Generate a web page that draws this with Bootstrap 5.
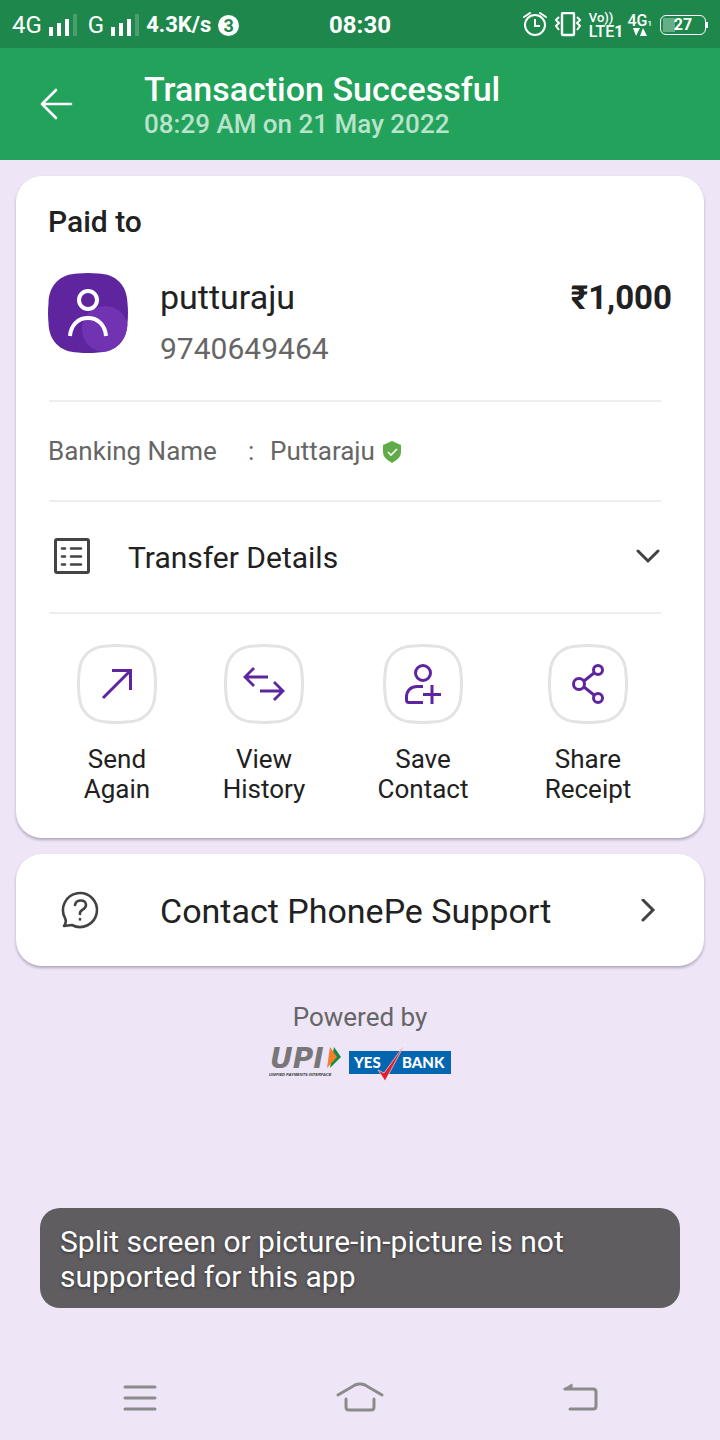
<!DOCTYPE html>
<html lang="en">
<head>
<meta charset="utf-8">
<meta name="viewport" content="width=device-width, initial-scale=1">
<title>Transaction Successful</title>
<link href="https://cdn.jsdelivr.net/npm/bootstrap@5.3.0/dist/css/bootstrap.min.css" rel="stylesheet">
<style>
  body { font-family: Roboto, "Liberation Sans", sans-serif; background: #eee5f6; color: #212121; }
  svg { display: block; flex: none; }
  .medium { font-weight: 500; }
  .statusbar { height: 48px; background: #1e884c; padding: 2px 12px 0; font-size: 24px; line-height: 28px; }
  .statusbar > div { flex: 1 1 0; }
  .status-left { gap: 7px; }
  .strong { font-weight: 700; }
  .speed { font-size: 22px; }
  .volte { font-size: 16px; line-height: 15px; font-weight: 500; }
  .volte .vo { font-size: 13px; line-height: 13px; }
  .data-net { font-size: 16px; line-height: 14px; font-weight: 500; }
  .data-net sub { font-size: 8px; bottom: 0; }
  .count { width: 21px; height: 21px; font-size: 18px; line-height: 21px; color: #1e884c; }
  .battery { width: 46px; height: 20px; border: 1px solid #fff; border-radius: 6px; font-size: 16px; line-height: 18px;
    background: linear-gradient(#67ad86, #67ad86) 2px 2px / 12px 14px no-repeat; }
  .battery-tip { width: 2px; height: 6px; }
  .appbar { height: 112px; background: #23a25c; padding: 0 32px; gap: 64px; }
  .appbar-text { padding-top: 2px; }
  .appbar h1 { font-size: 34px; line-height: 38px; }
  .appbar p { font-size: 26px; line-height: 32px; color: #b9e3cb; }
  .icon-btn { width: 48px; height: 48px; }
  .panel { border: 0; border-radius: 26px; box-shadow: 0 2px 3px rgba(70, 50, 90, .36); }
  .receipt h2 { font-size: 30px; line-height: 36px; padding: 28px 32px 0; }
  .payee { padding: 33px 32px 31px; gap: 32px; }
  .payee-name { font-size: 34px; line-height: 48px; }
  .payee-phone { font-size: 30px; line-height: 40px; margin-top: 8px; }
  .amount { font-size: 33px; line-height: 50px; }
  .dim { color: #666; }
  .rule { height: 2px; margin: 0 43px 0 33px; background: #eee; }
  .banking { height: 98px; padding: 0 32px; font-size: 26px; }
  .banking dt { width: 200px; }
  .banking dd { gap: 7px; }
  .banking .colon { width: 22px; }
  .line-btn { color: #212121; border: 0; background: none; text-align: left; text-decoration: none; }
  .details { height: 110px; padding: 0 44px 0 32px; font-size: 30px; gap: 32px; }
  .actions { display: grid; grid-template-columns: 138fr 156fr 162fr 168fr; padding: 30px 32px 34px; }
  .actions button { color: #212121; border: 0; background: none; font-size: 26px; line-height: 30px; gap: 20px; }
  .support { height: 112px; padding: 2px 44px 0 40px; font-size: 34px; gap: 56px; }
  .powered { font-size: 26px; line-height: 32px; padding-top: 35px; }
  .notice { background: #5f5d60; color: #fff; border-radius: 20px; font-size: 30px; line-height: 35px; padding: 16px 20px 14px; margin: 0 40px 48px; text-shadow: 0 1px 3px rgba(0, 0, 0, .5); }
  .notice p { max-width: 540px; }
  .sysnav { height: 84px; padding: 2px 16% 0; }
</style>
</head>
<body>
<div class="d-flex flex-column min-vh-100">
  <div class="statusbar d-flex align-items-center text-white">
    <div class="status-left d-flex align-items-center">
      <span>4G</span>
      <svg width="28" height="24" viewBox="0 0 28 24" fill="#fff"><path d="M0 14h4v9H0zM8 10h4v13H8zM16 6h4v17h-4z"/><path d="M24 1h4v22h-4z" opacity=".2"/></svg>
      <span class="ms-1">G</span>
      <svg width="28" height="24" viewBox="0 0 28 24" fill="#fff"><path d="M0 14h4v9H0zM8 10h4v13H8zM16 6h4v17h-4z"/><path d="M24 1h4v22h-4z" opacity=".2"/></svg>
      <span class="strong speed">4.3K/s</span>
      <span class="count strong bg-white rounded-circle text-center">3</span>
    </div>
    <time class="strong">08:30</time>
    <div class="d-flex align-items-center justify-content-end">
      <svg width="24" height="26" viewBox="0 0 24 26" fill="none" stroke="#fff" stroke-width="2"><circle cx="12" cy="13" r="10"/><path d="M12 7v7h5"/><path d="M1 5l6-4M23 5l-6-4" stroke-linecap="round"/></svg>
      <svg class="ms-2" width="26" height="26" viewBox="0 0 26 26" fill="none" stroke="#fff" stroke-width="2"><rect x="7" y="1" width="12" height="22" rx="1" stroke-width="2.400"/><path d="M4 5l-3 3 3 3-3 3 3 4M22 5l3 3-3 3 3 3-3 4"/></svg>
      <div class="volte ms-2"><div class="vo">Vo))</div><div>LTE<span class="strong">1</span></div></div>
      <div class="data-net ms-1 text-center"><div>4G<sub>1</sub></div>
        <svg class="mx-auto" width="14" height="8" viewBox="0 0 14 8" fill="#fff"><path d="M0 0h7L3 8zM7 8h7L10 0z"/></svg></div>
      <div class="battery ms-2 strong text-center">27</div><div class="battery-tip bg-white"></div>
    </div>
  </div>

  <header class="appbar d-flex align-items-center text-white">
    <button type="button" class="icon-btn btn p-0 border-0" aria-label="Back">
      <svg width="48" height="48" viewBox="0 0 48 48" fill="none" stroke="#fff" stroke-width="2.600" stroke-linecap="round" stroke-linejoin="round"><path d="M39 24H10M24 10L10 24l14 14"/></svg>
    </button>
    <div class="appbar-text">
      <h1 class="medium mb-0">Transaction Successful</h1>
      <p class="medium mb-0">08:29 AM on 21 May 2022</p>
    </div>
  </header>

  <main class="d-flex flex-column gap-3 p-3 pb-0">
    <section class="panel card receipt">
      <h2 class="medium mb-0">Paid to</h2>
      <div class="payee d-flex align-items-start">
        <svg width="80" height="80" viewBox="0 0 80 80"><defs><clipPath id="tile"><path d="M30 .5Q40-.5 50 .5C68 1 79 12 79.500 30Q80.500 40 79.500 50C79 68 68 79 50 79.500Q40 80.500 30 79.500C12 79 1 68 .5 50Q-.5 40 .5 30C1 12 12 1 30 .5z"/></clipPath></defs>
          <g clip-path="url(#tile)"><path fill="#5f259f" d="M0 0h80v80H0z"/><circle cx="57" cy="56" r="23" fill="#7233b3"/></g>
          <g fill="none" stroke="#fff" stroke-width="4"><circle cx="40" cy="27" r="9"/><path d="M22 63c1-11 8-18 18-18s17 7 18 18"/></g></svg>
        <div class="flex-grow-1">
          <div class="payee-name">putturaju</div>
          <div class="payee-phone dim">9740649464</div>
        </div>
        <div class="amount strong">₹1,000</div>
      </div>
      <div class="rule"></div>
      <dl class="banking dim d-flex align-items-center mb-0">
        <dt class="fw-normal">Banking Name</dt>
        <dd class="d-flex align-items-center mb-0"><span class="d-flex align-items-center"><span class="colon">:</span>Puttaraju</span>
          <svg width="20" height="26" viewBox="0 0 20 26"><path d="M10 3l9 4v7c0 5-4 8-9 11-5-3-9-6-9-11V7z" fill="#5fab46"/><path d="M6 14l3 3 6-6" fill="none" stroke="#fff" stroke-width="1.600"/></svg></dd>
      </dl>
      <div class="rule"></div>
      <button type="button" class="line-btn details d-flex align-items-center w-100">
        <svg width="48" height="48" viewBox="0 0 48 48" fill="none" stroke="#444"><rect x="7.500" y="6.500" width="33" height="33" rx="1.500" stroke-width="3"/><path d="M14 15.500h3M14 23.500h3M14 31.500h3M23 15.500h10M23 23.500h10M23 31.500h10" stroke-width="2.600" stroke-linecap="round"/></svg>
        <span class="flex-grow-1">Transfer Details</span>
        <svg width="24" height="16" viewBox="0 0 24 16" fill="none" stroke="#424242" stroke-width="3" stroke-linecap="round"><path d="M2 2l10 10L22 2"/></svg>
      </button>
      <div class="rule"></div>
      <div class="actions">
        <button type="button" class="d-flex flex-column align-items-center p-0">
          <svg width="80" height="80" viewBox="0 0 80 80" fill="none"><path id="ring" d="M30 2Q40 1 50 2C67 2.500 77.500 13 78 30Q79 40 78 50C77.500 67 67 77.500 50 78Q40 79 30 78C13 77.500 2.500 67 2 50Q1 40 2 30C2.500 13 13 2.500 30 2z" stroke="#e3e3e3" stroke-width="3"/><path d="M26 54L54 26M35 26.500h18.500V46" stroke="#5f259f" stroke-width="3"/></svg>
          <span>Send<br>Again</span>
        </button>
        <button type="button" class="d-flex flex-column align-items-center p-0">
          <svg width="80" height="80" viewBox="0 0 80 80" fill="none"><use href="#ring"/><path d="M44 33H21M30 24l-9 9 9 9M36 47h23M50 38l9 9-9 9" stroke="#5f259f" stroke-width="2.800"/></svg>
          <span>View<br>History</span>
        </button>
        <button type="button" class="d-flex flex-column align-items-center p-0">
          <svg width="80" height="80" viewBox="0 0 80 80" fill="none"><use href="#ring"/><g stroke="#5f259f" stroke-width="3"><circle cx="40" cy="29" r="7.500"/><path d="M40 42.500h-6c-7 0-10.500 5-10.500 10.500V56q0 2.500 2.500 2.500h14M49 41v19M40 50.500h18"/></g></svg>
          <span>Save<br>Contact</span>
        </button>
        <button type="button" class="d-flex flex-column align-items-center p-0">
          <svg width="80" height="80" viewBox="0 0 80 80" fill="none"><use href="#ring"/><g stroke="#5f259f" stroke-width="3"><circle cx="31" cy="40" r="5.500"/><circle cx="50" cy="26" r="4.500"/><circle cx="50" cy="54" r="4.500"/><path d="M36 37l10-8M36 43l10 8"/></g></svg>
          <span>Share<br>Receipt</span>
        </button>
      </div>
    </section>

    <a href="#" class="panel card line-btn bg-white support d-flex flex-row align-items-center">
      <svg width="48" height="48" viewBox="0 0 48 48" fill="none" stroke="#424242" stroke-width="2.600" stroke-linecap="round" stroke-linejoin="round"><path d="M9 31a17 17 0 1 1 7 7l-8 1q3-4 1-8z"/><path d="M19 18c1-6 11-6 11 0 0 5-6 4-6 8v1M24 32v.5"/></svg>
      <span class="flex-grow-1">Contact PhonePe Support</span>
      <svg width="24" height="24" viewBox="0 0 24 24" fill="none" stroke="#424242" stroke-width="3" stroke-linecap="round"><path d="M7 1l10 10L7 21"/></svg>
    </a>
  </main>

  <footer class="powered text-center dim">
    Powered by
    <div class="d-flex justify-content-center gap-2 mt-2">
      <svg width="72" height="40" viewBox="0 0 72 40" role="img" aria-label="UPI, Unified Payments Interface">
        <text x="1" y="27" font-family="DejaVu Sans" font-size="28" font-weight="700" font-style="oblique" fill="#777">UPI</text>
        <path d="M65 6l7 10-11 11z" fill="#128b44"/><path d="M61 6l7 10-10 11z" fill="#f47c2b"/>
        <text x="0" y="35" font-family="Liberation Sans" font-size="4" font-style="italic" font-weight="700" fill="#333">UNIFIED PAYMENTS INTERFACE</text></svg>
      <svg width="102" height="40" viewBox="0 0 102 40" role="img" aria-label="Yes Bank">
        <path fill="#0466b1" d="M0 10h102v23H0z"/>
        <g font-family="Lato" font-weight="900" font-size="15" fill="#fff"><text x="5" y="27">YES</text><text x="53" y="27">BANK</text></g>
        <path d="M56 3L36 40l-7-11 6 3z" fill="#e31e2d" stroke="#fff" stroke-width=".6"/></svg>
    </div>
  </footer>

  <div class="notice mt-auto" role="status"><p class="mb-0">Split screen or picture-in-picture is not supported for this app</p></div>

  <nav class="sysnav d-flex justify-content-between align-items-center">
    <button type="button" class="btn p-0 border-0" aria-label="Recent apps"><svg width="48" height="40" viewBox="0 0 48 40" fill="none" stroke="#8c8a8d" stroke-width="3" stroke-linecap="round"><path d="M10 8h30M10 19h30M10 30h30"/></svg></button>
    <button type="button" class="btn p-0 border-0" aria-label="Home"><svg width="48" height="40" viewBox="0 0 48 40" fill="none" stroke="#8c8a8d" stroke-width="3" stroke-linecap="round"><path d="M2 16l17-10q5-2 10 0l17 10M10 20v8q0 3 3 3h22q3 0 3-3v-8"/></svg></button>
    <button type="button" class="btn p-0 border-0" aria-label="Back"><svg width="48" height="40" viewBox="0 0 48 40" fill="none" stroke="#8c8a8d" stroke-width="3" stroke-linecap="round"><path d="M8 10h28q3 0 3 3v14q0 3-3 3H13"/><path d="M7 10l8-5v5z" stroke-width="1" fill="#8c8a8d"/></svg></button>
  </nav>
</div>
<script src="https://cdn.jsdelivr.net/npm/bootstrap@5.3.0/dist/js/bootstrap.bundle.min.js"></script>
</body>
</html>
